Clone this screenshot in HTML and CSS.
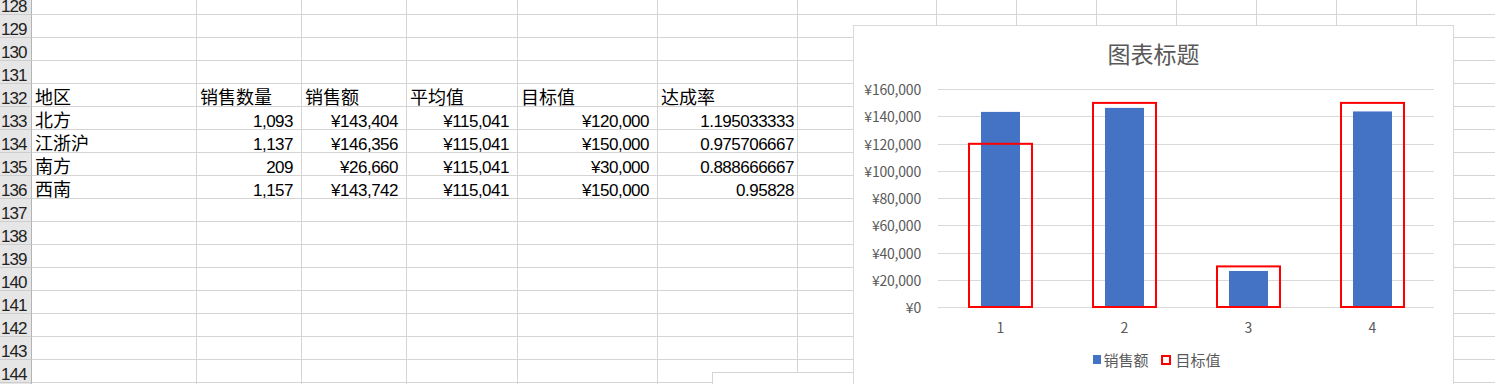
FILE: index.html
```html
<!DOCTYPE html>
<html lang="zh-CN">
<head>
<meta charset="utf-8">
<title>销售图表</title>
<link rel="stylesheet" href="styles.css">
</head>
<body>
<div class="sheet">
  <div class="grid">
    <div class="row"><div class="rh">128</div><div></div><div></div><div></div><div></div><div></div><div></div><div></div><div></div><div></div><div></div><div></div><div></div><div></div><div></div></div>
    <div class="row"><div class="rh">129</div><div></div><div></div><div></div><div></div><div></div><div></div><div></div><div></div><div></div><div></div><div></div><div></div><div></div><div></div></div>
    <div class="row"><div class="rh">130</div><div></div><div></div><div></div><div></div><div></div><div></div><div></div><div></div><div></div><div></div><div></div><div></div><div></div><div></div></div>
    <div class="row"><div class="rh">131</div><div></div><div></div><div></div><div></div><div></div><div></div><div></div><div></div><div></div><div></div><div></div><div></div><div></div><div></div></div>
    <div class="row"><div class="rh">132</div><div class="t">地区</div><div class="t">销售数量</div><div class="t">销售额</div><div class="t">平均值</div><div class="t">目标值</div><div class="t">达成率</div><div></div><div></div><div></div><div></div><div></div><div></div><div></div><div></div></div>
    <div class="row"><div class="rh">133</div><div class="t">北方</div><div class="n">1,093</div><div class="n">¥143,404</div><div class="n">¥115,041</div><div class="n">¥120,000</div><div class="g">1.195033333</div><div></div><div></div><div></div><div></div><div></div><div></div><div></div><div></div></div>
    <div class="row"><div class="rh">134</div><div class="t">江浙沪</div><div class="n">1,137</div><div class="n">¥146,356</div><div class="n">¥115,041</div><div class="n">¥150,000</div><div class="g">0.975706667</div><div></div><div></div><div></div><div></div><div></div><div></div><div></div><div></div></div>
    <div class="row"><div class="rh">135</div><div class="t">南方</div><div class="n">209</div><div class="n">¥26,660</div><div class="n">¥115,041</div><div class="n">¥30,000</div><div class="g">0.888666667</div><div></div><div></div><div></div><div></div><div></div><div></div><div></div><div></div></div>
    <div class="row"><div class="rh">136</div><div class="t">西南</div><div class="n">1,157</div><div class="n">¥143,742</div><div class="n">¥115,041</div><div class="n">¥150,000</div><div class="g">0.95828</div><div></div><div></div><div></div><div></div><div></div><div></div><div></div><div></div></div>
    <div class="row"><div class="rh">137</div><div></div><div></div><div></div><div></div><div></div><div></div><div></div><div></div><div></div><div></div><div></div><div></div><div></div><div></div></div>
    <div class="row"><div class="rh">138</div><div></div><div></div><div></div><div></div><div></div><div></div><div></div><div></div><div></div><div></div><div></div><div></div><div></div><div></div></div>
    <div class="row"><div class="rh">139</div><div></div><div></div><div></div><div></div><div></div><div></div><div></div><div></div><div></div><div></div><div></div><div></div><div></div><div></div></div>
    <div class="row"><div class="rh">140</div><div></div><div></div><div></div><div></div><div></div><div></div><div></div><div></div><div></div><div></div><div></div><div></div><div></div><div></div></div>
    <div class="row"><div class="rh">141</div><div></div><div></div><div></div><div></div><div></div><div></div><div></div><div></div><div></div><div></div><div></div><div></div><div></div><div></div></div>
    <div class="row"><div class="rh">142</div><div></div><div></div><div></div><div></div><div></div><div></div><div></div><div></div><div></div><div></div><div></div><div></div><div></div><div></div></div>
    <div class="row"><div class="rh">143</div><div></div><div></div><div></div><div></div><div></div><div></div><div></div><div></div><div></div><div></div><div></div><div></div><div></div><div></div></div>
    <div class="row"><div class="rh">144</div><div></div><div></div><div></div><div></div><div></div><div></div><div></div><div></div><div></div><div></div><div></div><div></div><div></div><div></div></div>
    <div class="row"><div class="rh"></div><div></div><div></div><div></div><div></div><div></div><div></div><div></div><div></div><div></div><div></div><div></div><div></div><div></div><div></div></div>
  </div>

  <div class="under-box"></div>

  <div class="chart">
    <svg class="chart-svg" width="599" height="360" viewBox="0 0 599 360">
      <text class="title" x="299.5" y="27">图表标题</text>
      <g class="gridlines">
        <line x1="84" x2="580" y1="281.5" y2="281.5"/>
        <line x1="84" x2="580" y1="254.5" y2="254.5"/>
        <line x1="84" x2="580" y1="227.5" y2="227.5"/>
        <line x1="84" x2="580" y1="199.5" y2="199.5"/>
        <line x1="84" x2="580" y1="172.5" y2="172.5"/>
        <line x1="84" x2="580" y1="145.5" y2="145.5"/>
        <line x1="84" x2="580" y1="118.5" y2="118.5"/>
        <line x1="84" x2="580" y1="90.5" y2="90.5"/>
        <line x1="84" x2="580" y1="63.5" y2="63.5"/>
      </g>
      <g class="ylabels">
        <text x="67" y="281">¥0</text>
        <text x="67" y="254">¥20,000</text>
        <text x="67" y="227">¥40,000</text>
        <text x="67" y="199">¥60,000</text>
        <text x="67" y="172">¥80,000</text>
        <text x="67" y="145">¥100,000</text>
        <text x="67" y="118">¥120,000</text>
        <text x="67" y="90">¥140,000</text>
        <text x="67" y="63">¥160,000</text>
      </g>
      <g class="bars">
        <rect x="127" y="85.9" width="39" height="195.4"/>
        <rect x="251" y="81.9" width="39" height="199.4"/>
        <rect x="375" y="245.0" width="39" height="36.3"/>
        <rect x="499" y="85.45" width="39" height="195.85"/>
      </g>
      <g class="targets">
        <rect x="115" y="117.8" width="63" height="163.2"/>
        <rect x="239" y="76.9" width="63" height="204.1"/>
        <rect x="363" y="240.4" width="63" height="40.6"/>
        <rect x="487" y="76.9" width="63" height="204.1"/>
      </g>
      <g class="xlabels">
        <text x="146.5" y="300.5">1</text>
        <text x="270.5" y="300.5">2</text>
        <text x="394.5" y="300.5">3</text>
        <text x="518.5" y="300.5">4</text>
      </g>
      <g class="legend">
        <rect class="key-bar" x="239" y="329" width="8" height="9"/>
        <text x="249.5" y="333">销售额</text>
        <rect class="key-target" x="308" y="330" width="8" height="8"/>
        <text x="321.5" y="333">目标值</text>
      </g>
    </svg>
  </div>
</div>
</body>
</html>
```

FILE: styles.css
```css
html, body {
  margin: 0;
  padding: 0;
  background: #ffffff;
}

body {
  overflow: hidden;
  font-family: "Liberation Sans", "Noto Sans CJK SC", sans-serif;
}

.sheet {
  position: relative;
  width: 1495px;
  height: 384px;
  overflow: hidden;
}

.grid {
  margin-top: -8px;
  display: flex;
  flex-direction: column;
}

.row {
  display: grid;
  grid-template-columns: 32px 165px 105px 105px 111px 140px 140px 139px repeat(7, 80px);
  height: 23px;
}

.row > div {
  box-sizing: border-box;
  height: 23px;
  border-right: 1px solid #d4d4d4;
  border-bottom: 1px solid #d4d4d4;
  display: flex;
  align-items: flex-end;
  font-family: "Liberation Sans", "Noto Sans CJK SC", sans-serif;
  color: #000000;
  white-space: nowrap;
}

.row > .rh {
  background: #e6e6e6;
  border-right: 1px solid #b4b4b4;
  border-bottom: 1px solid #cdcdcd;
  color: #222222;
  padding-left: 1px;
  font-size: 17px;
  line-height: 15px;
  letter-spacing: -1px;
}

.row > .t {
  padding-left: 3px;
  font-size: 18px;
  line-height: 16px;
}

.row > .n {
  justify-content: flex-end;
  padding-right: 8px;
  font-size: 17px;
  line-height: 15px;
  letter-spacing: -0.5px;
}

.row > .g {
  justify-content: flex-end;
  padding-right: 3px;
  font-size: 17px;
  line-height: 15px;
  letter-spacing: -0.5px;
}

.under-box {
  position: absolute;
  left: 712px;
  top: 372px;
  width: 300px;
  height: 40px;
  background: #ffffff;
  border-top: 1px solid #d4d4d4;
  border-left: 1px solid #d4d4d4;
}

.chart {
  position: absolute;
  left: 853px;
  top: 25px;
  width: 599px;
  height: 380px;
  background: #ffffff;
  border: 1px solid #d9d9d9;
}

.chart-svg {
  display: block;
  font-family: "Noto Sans CJK SC", "Noto Sans", sans-serif;
}

.title {
  font-size: 23px;
  fill: #595959;
  text-anchor: middle;
  dominant-baseline: central;
}

.gridlines line {
  stroke: #d9d9d9;
  stroke-width: 1;
}

.ylabels text {
  font-size: 14px;
  letter-spacing: -0.2px;
  fill: #595959;
  text-anchor: end;
  dominant-baseline: central;
}

.xlabels text {
  font-size: 14px;
  fill: #595959;
  text-anchor: middle;
  dominant-baseline: central;
}

.bars rect {
  fill: #4472c4;
}

.targets rect {
  fill: none;
  stroke: #ff0000;
  stroke-width: 2;
}

.legend text {
  font-size: 15px;
  fill: #595959;
  dominant-baseline: central;
}

.key-bar {
  fill: #4472c4;
}

.key-target {
  fill: #ffffff;
  stroke: #ff0000;
  stroke-width: 2;
}
```
